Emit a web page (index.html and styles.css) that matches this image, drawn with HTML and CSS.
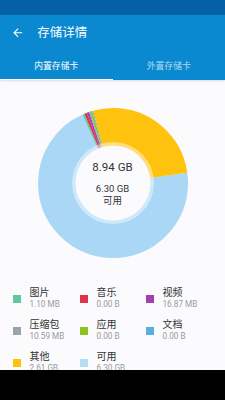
FILE: index.html
```html
<!DOCTYPE html>
<html lang="zh">
<head>
<meta charset="utf-8">
<title>存储详情</title>
<link rel="stylesheet" href="styles.css">
</head>
<body>
<div class="screen">
  <div class="statusbar"></div>
  <div class="appbar">
    <svg class="back" viewBox="0 0 24 24"><path d="M20 11H7.83l5.59-5.59L12 4l-8 8 8 8 1.41-1.41L7.83 13H20v-2z" fill="#fff"/></svg>
    <span class="title">存储详情</span>
  </div>
  <div class="tabs">
    <div class="tab active">内置存储卡</div>
    <div class="tab">外置存储卡</div>
  </div>
  <div class="content">
    <div class="chart">
      <svg class="donut" viewBox="0 0 150 150" width="150" height="150">
        <g transform="rotate(-90 75 75)" fill="none" stroke-width="38">
          <circle cx="75" cy="75" r="56" pathLength="360" stroke="#a9d7f5" stroke-dasharray="254 360" stroke-dashoffset="-82"/>
          <circle cx="75" cy="75" r="56" pathLength="360" stroke="#5ec9a1" stroke-dasharray="1.6 360" stroke-dashoffset="-336"/>
          <circle cx="75" cy="75" r="56" pathLength="360" stroke="#e0334b" stroke-dasharray="2 360" stroke-dashoffset="-337.6"/>
          <circle cx="75" cy="75" r="56" pathLength="360" stroke="#a13fb3" stroke-dasharray="1.7 360" stroke-dashoffset="-339.6"/>
          <circle cx="75" cy="75" r="56" pathLength="360" stroke="#98a6a8" stroke-dasharray="0.9 360" stroke-dashoffset="-341.3"/>
          <circle cx="75" cy="75" r="56" pathLength="360" stroke="#8dc43a" stroke-dasharray="1.6 360" stroke-dashoffset="-342.2"/>
          <circle cx="75" cy="75" r="56" pathLength="360" stroke="#6ab4c8" stroke-dasharray="0.8 360" stroke-dashoffset="-343.8"/>
          <circle cx="75" cy="75" r="56" pathLength="360" stroke="#ffc20e" stroke-dasharray="15.5 360" stroke-dashoffset="-344.5"/>
          <circle cx="75" cy="75" r="56" pathLength="360" stroke="#ffc20e" stroke-dasharray="82 360" stroke-dashoffset="0"/>
        </g>
        <circle cx="75" cy="75" r="41" fill="#ffffff" fill-opacity="0.45"/>
        <circle cx="75" cy="75" r="37.5" fill="#fbfbfd"/>
      </svg>
      <div class="center">
        <div class="total">8.94 GB</div>
        <div class="free">6.30 GB</div>
        <div class="free">可用</div>
      </div>
    </div>
    <div class="legend">
      <div class="item"><span class="sq" style="background:#5ec9a1"></span><div class="txt"><div class="lbl">图片</div><div class="val">1.10 MB</div></div></div>
      <div class="item"><span class="sq" style="background:#e0334b"></span><div class="txt"><div class="lbl">音乐</div><div class="val">0.00 B</div></div></div>
      <div class="item"><span class="sq" style="background:#a13fb3"></span><div class="txt"><div class="lbl">视频</div><div class="val">16.87 MB</div></div></div>
      <div class="item"><span class="sq" style="background:#98a6a8"></span><div class="txt"><div class="lbl">压缩包</div><div class="val">10.59 MB</div></div></div>
      <div class="item"><span class="sq" style="background:#8dc41e"></span><div class="txt"><div class="lbl">应用</div><div class="val">0.00 B</div></div></div>
      <div class="item"><span class="sq" style="background:#5aaede"></span><div class="txt"><div class="lbl">文档</div><div class="val">0.00 B</div></div></div>
      <div class="item"><span class="sq" style="background:#ffc20e"></span><div class="txt"><div class="lbl">其他</div><div class="val">2.61 GB</div></div></div>
      <div class="item"><span class="sq" style="background:#b5dcf3"></span><div class="txt"><div class="lbl">可用</div><div class="val">6.30 GB</div></div></div>
    </div>
  </div>
  <div class="navbar"></div>
</div>
</body>
</html>
```
FILE: styles.css
```css
* { box-sizing: border-box; }
html, body { margin: 0; padding: 0; }
body {
  font-family: Roboto, "Noto Sans CJK SC", sans-serif;
  background: #000;
}
.screen {
  width: 225px;
  height: 400px;
  display: flex;
  flex-direction: column;
  overflow: hidden;
  background: #fbfbfd;
}
.statusbar {
  height: 15px;
  flex: none;
  background: #0560a6;
}
.appbar {
  height: 35px;
  flex: none;
  background: #0a89d1;
  display: flex;
  align-items: center;
  color: #fff;
}
.back {
  width: 13.5px;
  height: 13.5px;
  margin-left: 10.8px;
  flex: none;
}
.title {
  margin-left: 13px;
  font-size: 12.5px;
  line-height: 16px;
}
.tabs {
  height: 30px;
  flex: none;
  background: #0a89d1;
  display: flex;
  box-shadow: 0 1px 2px rgba(0, 0, 0, 0.12);
  position: relative;
  z-index: 1;
}
.tab {
  flex: 1;
  display: flex;
  align-items: center;
  justify-content: center;
  font-size: 8.8px;
  color: rgba(255, 255, 255, 0.7);
  border-bottom: 1.5px solid transparent;
  padding-top: 1px;
}
.tab.active {
  color: #fff;
  border-bottom-color: #fff;
}
.content {
  flex: 1;
  overflow: hidden;
  display: flex;
  flex-direction: column;
}
.chart {
  position: relative;
  width: 150px;
  height: 150px;
  margin: 28px auto 0;
  flex: none;
}
.donut { display: block; }
.center {
  position: absolute;
  left: 0;
  right: 0;
  top: 52px;
  text-align: center;
  color: #333;
}
.total {
  font-size: 11.5px;
  line-height: 14px;
  margin-bottom: 9px;
}
.free {
  font-size: 9.5px;
  line-height: 11.5px;
}
.legend {
  margin-top: 29px;
  padding-left: 13px;
  display: grid;
  grid-template-columns: 67px 66px 66px;
  row-gap: 9px;
}
.item {
  display: flex;
  align-items: center;
  height: 23px;
}
.sq {
  width: 7.5px;
  height: 7.5px;
  flex: none;
  margin-right: 9px;
  margin-top: 1px;
}
.txt { display: flex; flex-direction: column; }
.lbl {
  font-size: 10px;
  line-height: 12px;
  color: #333;
}
.val {
  font-size: 8.2px;
  line-height: 11px;
  color: #9a9a9a;
}
.navbar {
  height: 30px;
  flex: none;
  background: #000;
}
```
